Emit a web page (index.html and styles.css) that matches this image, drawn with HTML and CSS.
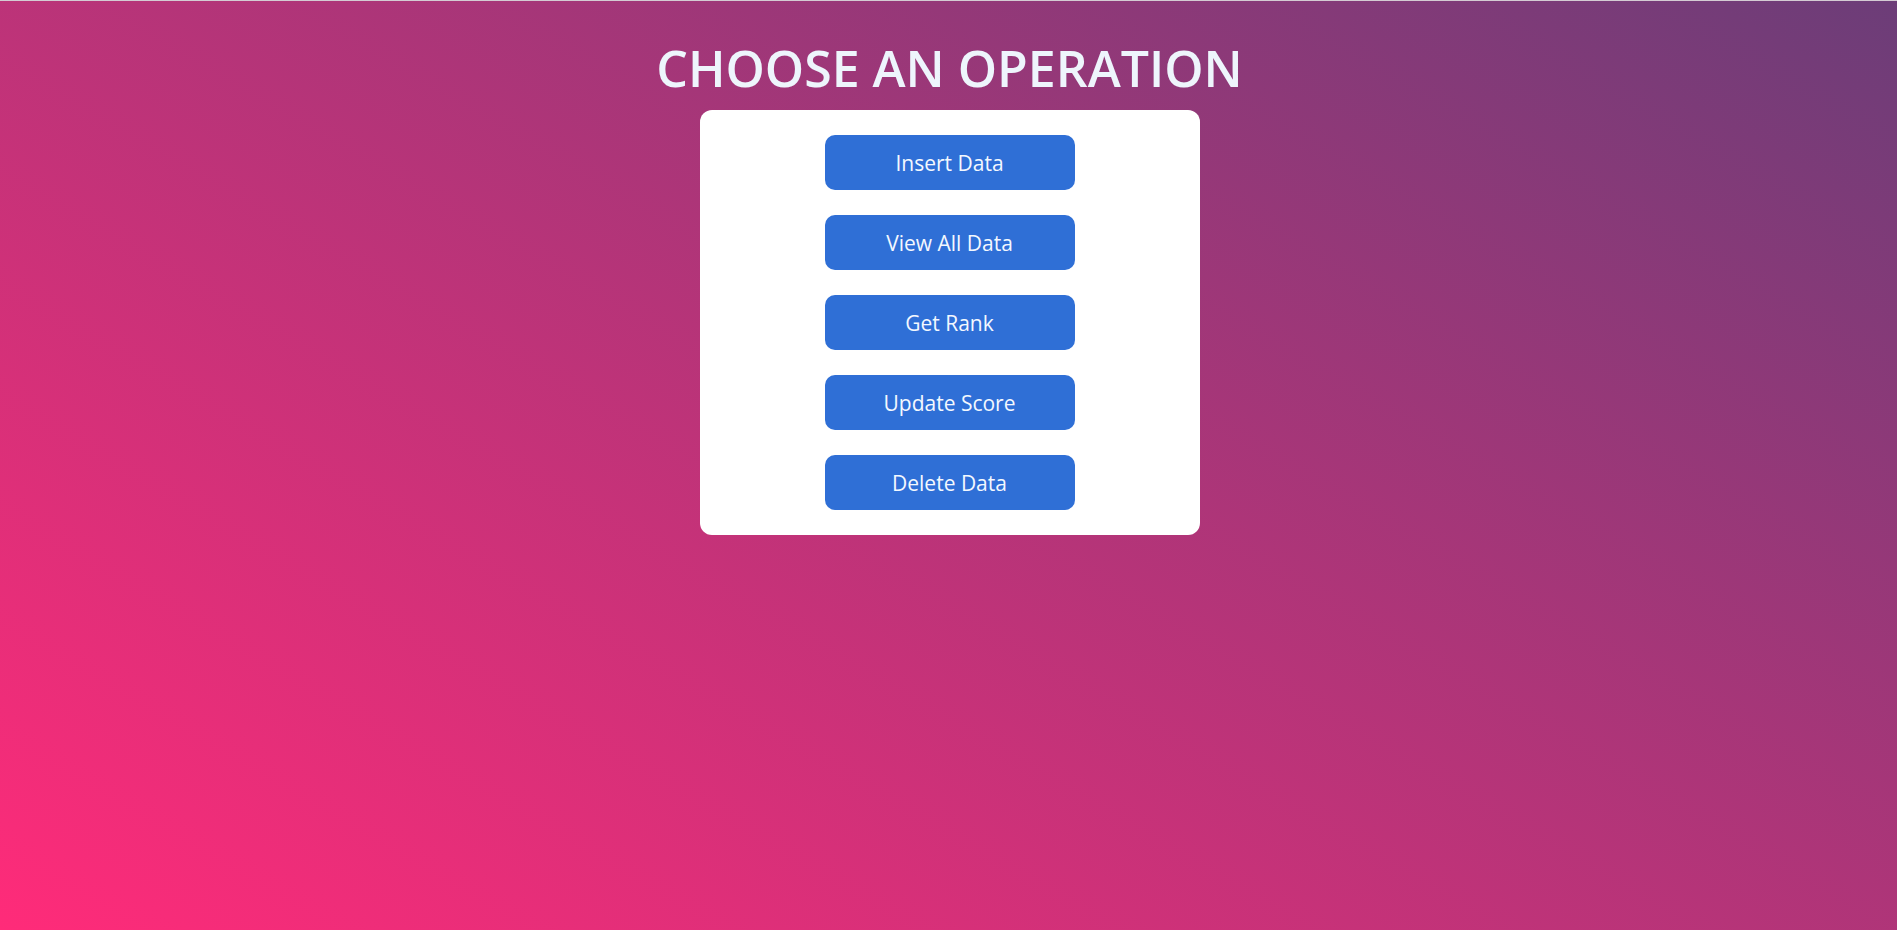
FILE: index.html
```html
<!DOCTYPE html>
<html lang="en">
<head>
<meta charset="utf-8">
<title>Choose an Operation</title>
<link rel="stylesheet" href="styles.css">
</head>
<body>
<main class="page">
  <h1 class="title">CHOOSE AN OPERATION</h1>
  <div class="card">
    <button class="op-btn" type="button">Insert Data</button>
    <button class="op-btn" type="button">View All Data</button>
    <button class="op-btn" type="button">Get Rank</button>
    <button class="op-btn" type="button">Update Score</button>
    <button class="op-btn" type="button">Delete Data</button>
  </div>
</main>
</body>
</html>
```

FILE: styles.css
```css
* { box-sizing: border-box; }

html, body {
  margin: 0;
  padding: 0;
  height: 100%;
}

body {
  font-family: "Open Sans", "Liberation Sans", sans-serif;
  background: linear-gradient(30deg, #ff2b79 0%, #6c3d78 100%);
  border-top: 1px solid #d4cbd3;
  overflow: hidden;
}

.page {
  display: flex;
  flex-direction: column;
  align-items: center;
  padding-top: 29px;
  padding-left: 2px;
}

.title {
  margin: 0 0 4px;
  height: 76px;
  line-height: 76px;
  font-size: 50px;
  font-weight: 600;
  color: #eef5fc;
  letter-spacing: 0;
}

.card {
  width: 500px;
  background: #ffffff;
  border-radius: 12px;
  padding: 25px 0;
  display: flex;
  flex-direction: column;
  align-items: center;
  gap: 25px;
}

.op-btn {
  width: 250px;
  height: 55px;
  border: none;
  border-radius: 10px;
  background: #2f6fd6;
  color: #f3f8ff;
  font-family: "Open Sans", "Liberation Sans", sans-serif;
  font-size: 21px;
  font-weight: 500;
  cursor: pointer;
}
```
